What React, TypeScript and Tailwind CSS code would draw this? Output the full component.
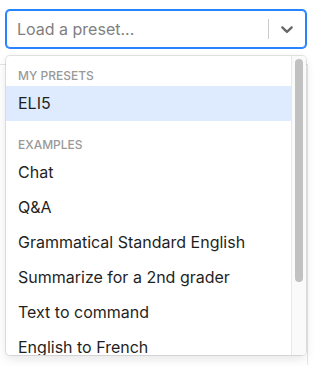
import React from "react";

// Preset groups shown in the open menu
const groups = [
  { label: "My presets", options: ["ELI5"] },
  {
    label: "Examples",
    options: [
      "Chat",
      "Q&A",
      "Grammatical Standard English",
      "Summarize for a 2nd grader",
      "Text to command",
      "English to French",
    ],
  },
];

function Chevron() {
  return (
    <svg viewBox="0 0 20 20" className="w-5 h-5" fill="currentColor" aria-hidden="true">
      <path d="M4.516 7.548c0.436-0.446 1.043-0.481 1.576 0l3.908 3.747 3.908-3.747c0.533-0.481 1.141-0.446 1.574 0 0.436 0.445 0.408 1.197 0 1.615-0.406 0.418-4.695 4.502-4.695 4.502-0.217 0.223-0.502 0.335-0.787 0.335s-0.57-0.112-0.789-0.335c0 0-4.287-4.084-4.695-4.502s-0.436-1.17 0-1.615z" />
    </svg>
  );
}

export default function App() {
  return (
    <div className="w-[314px] h-[366px] bg-white overflow-hidden font-['Inter',sans-serif] text-[16px]">
      <div className="pt-[10px] pl-[6px]">
        <div className="relative w-[300px]">
          {/* control */}
          <div className="flex items-center h-[38px] rounded-[4px] border border-[#2684ff] shadow-[0_0_0_1px_#2684ff] bg-white">
            <div className="flex-1 px-[8px] py-[2px]">
              <span className="mx-[2px] text-[#808080]">Load a preset...</span>
            </div>
            <div className="flex items-center self-stretch">
              <span className="w-px h-[20px] bg-[#cccccc]" />
              <span className="p-[8px] text-[#666666]">
                <Chevron />
              </span>
            </div>
          </div>

          {/* menu */}
          <div className="absolute left-0 top-full mt-[8px] w-[300px] z-10 bg-white rounded-[4px] shadow-[0_0_0_1px_rgba(0,0,0,0.1),0_4px_11px_rgba(0,0,0,0.1)] flex overflow-hidden">
            <div className="flex-1 h-[299px] overflow-hidden py-[4px]">
              {groups.map((g, gi) => (
                <div key={gi} className="py-[8px]">
                  <div className="px-[12px] mb-[3px] text-[12px] leading-[15px] font-medium uppercase text-[#999999]">
                    {g.label}
                  </div>
                  {g.options.map((o) => (
                    <div
                      key={o}
                      className={
                        "px-[12px] py-[8px] leading-[19px] text-[#1f1f1f] whitespace-nowrap " +
                        (o === "ELI5" ? "bg-[#deebff]" : "")
                      }
                    >
                      {o}
                    </div>
                  ))}
                </div>
              ))}
            </div>
            {/* scrollbar */}
            <div className="w-[15px] h-[299px] bg-[#fafafa] border-l border-[#e8e8e8] pt-[3px] pl-[3px]">
              <div className="w-[8px] h-[223px] rounded-full bg-[#c1c1c1]" />
            </div>
          </div>
        </div>
      </div>
      {/* panel edge behind the menu */}
      <div className="mt-[16px] w-[308px] h-[301px] border-t border-r border-[#e5e5e5]" />
    </div>
  );
}
